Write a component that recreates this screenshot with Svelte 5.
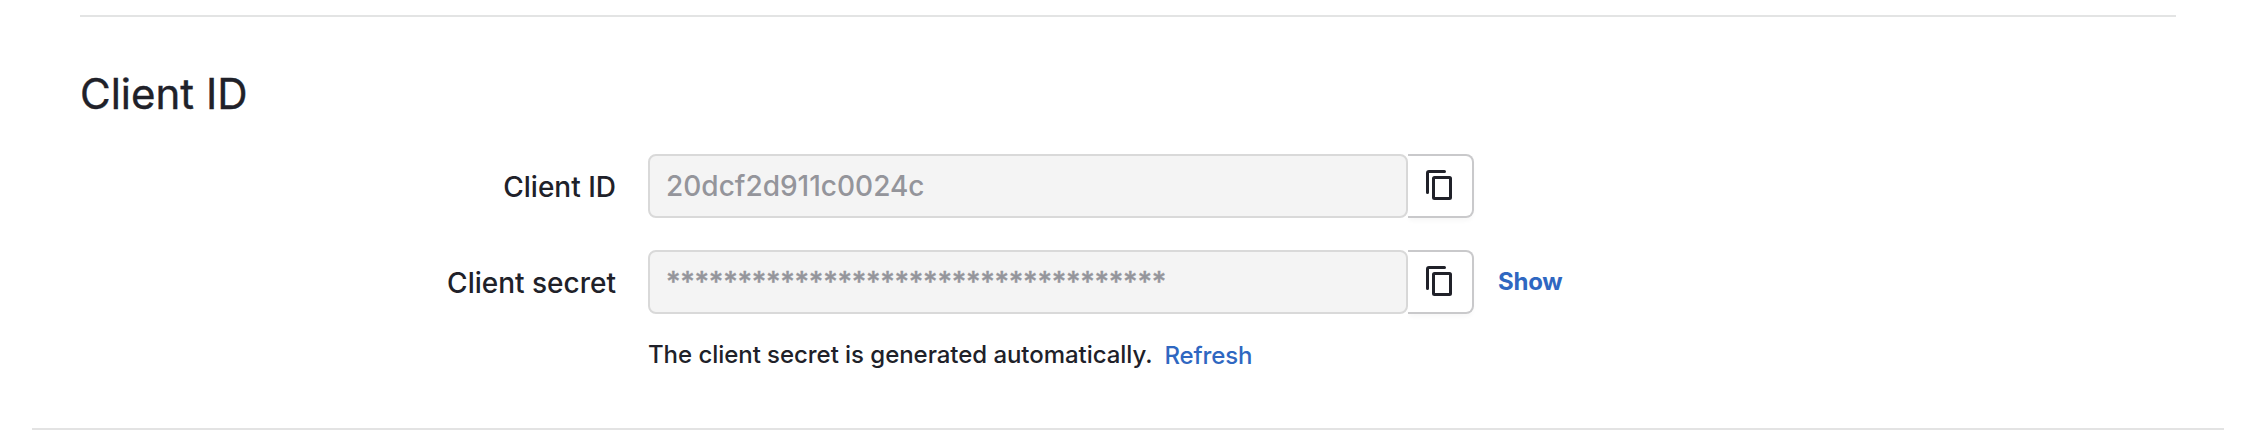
<script>
  const fields = [
    { id: 'client-id', label: 'Client ID', value: '20dcf2d911c0024c', secret: false },
    { id: 'client-secret', label: 'Client secret', value: '*'.repeat(35), secret: true }
  ];
</script>

<main>
  <section>
    <h2>Client ID</h2>
    <div class="rows">
      {#each fields as field (field.id)}
        <div class="row">
          <span class="label">{field.label}</span>
          <div class="control">
            <div class="value" class:masked={field.secret}>{field.value}</div>
            <button class="copy" aria-label="Copy">
              <svg width="26" height="30" viewBox="0 0 26 30" fill="none" stroke="currentColor" stroke-width="3">
                <path d="M1.5 22.5V3Q1.5 1.5 3 1.5H18.5" stroke-linecap="round" />
                <rect x="7.5" y="7.5" width="17" height="21" rx="1" />
              </svg>
            </button>
            {#if field.secret}
              <button class="show">Show</button>
            {/if}
          </div>
        </div>
      {/each}
    </div>
    <p><span>The client secret is generated automatically.</span><button class="refresh">Refresh</button></p>
  </section>
</main>

<style>
  :global(body) {
    background: #fff;
  }
  main {
    box-sizing: border-box;
    height: 430px;
    margin: 0 34px 0 32px;
    padding: 15px 48px 0;
    border-bottom: 2px solid #e3e3e3;
    font-family: Inter, sans-serif;
    font-optical-sizing: none;
    font-weight: 500;
    color: #202129;
  }
  section {
    border-top: 2px solid #e3e4e4;
    padding-top: 51px;
  }
  h2 {
    margin: 0;
    height: 86px;
    line-height: 52px;
    font-size: 42px;
    font-weight: 400;
    -webkit-text-stroke: 0.4px currentColor;
  }
  .rows {
    display: grid;
    gap: 32px;
  }
  .row {
    display: grid;
    grid-template-columns: 536px 1fr;
    column-gap: 32px;
    height: 64px;
    align-items: center;
  }
  .label {
    text-align: right;
    font-size: 28px;
    line-height: 62px;
    padding-top: 2px;
  }
  .control {
    display: flex;
    align-items: center;
  }
  .value {
    box-sizing: border-box;
    width: 760px;
    height: 64px;
    padding: 0 16px;
    border: 2px solid #d9d9d9;
    border-radius: 8px;
    background: #f4f4f4;
    color: #94959b;
    font-size: 28px;
    line-height: 60px;
  }
  .masked {
    letter-spacing: -0.29px;
    -webkit-text-stroke: 0.4px currentColor;
  }
  button {
    padding: 0;
    border: 0;
    background: none;
    font-family: inherit;
    cursor: pointer;
  }
  .copy {
    box-sizing: border-box;
    display: flex;
    align-items: center;
    width: 66px;
    height: 64px;
    padding: 0 0 2px 18px;
    border: 2px solid #c9c9cb;
    border-left: 0;
    border-radius: 0 8px 8px 0;
    box-shadow: 0 4px 4px -1px rgba(0, 0, 0, 0.03);
    color: #202129;
  }
  .show {
    margin-left: 24px;
    color: #2f67c1;
    font-size: 24px;
    font-weight: 700;
    letter-spacing: -0.25px;
    line-height: 32px;
  }
  p {
    display: flex;
    margin: 23px 0 0 568px;
    font-size: 24px;
    letter-spacing: -0.05px;
    line-height: 36px;
  }
  .refresh {
    margin: 1px 0 0 12px;
    color: #2f67c1;
    font-size: 24px;
    font-weight: 500;
    letter-spacing: -0.12px;
    line-height: 36px;
  }
</style>
